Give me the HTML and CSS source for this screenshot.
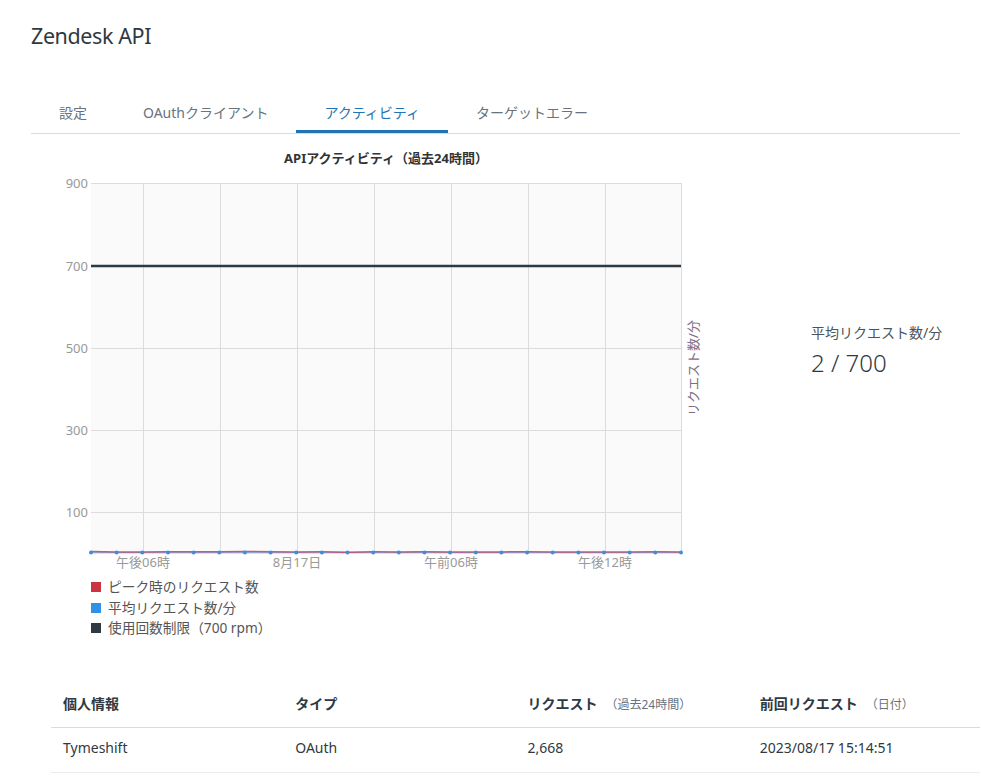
FILE: index.html
```html
<!DOCTYPE html>
<html lang="ja">
<head>
<meta charset="utf-8">
<title>Zendesk API</title>
<link rel="stylesheet" href="styles.css">
</head>
<body>
<div class="page">
  <h1 class="title">Zendesk API</h1>
  <nav class="tabs">
    <div class="tab">設定</div>
    <div class="tab">OAuthクライアント</div>
    <div class="tab active">アクティビティ</div>
    <div class="tab">ターゲットエラー</div>
  </nav>

  <section class="activity">
    <div class="chart-col">
      <svg class="chart" width="720" height="436" viewBox="0 0 720 436">
        <text class="chart-title" x="386" y="29" text-anchor="middle">APIアクティビティ（過去24時間）</text>
        <rect x="91" y="49" width="590" height="369" fill="#fafafa"/>
        <g stroke="#dcdcdc" stroke-width="1">
          <line x1="91" y1="49.5" x2="681" y2="49.5"/>
          <line x1="91" y1="214.5" x2="681" y2="214.5"/>
          <line x1="91" y1="296.5" x2="681" y2="296.5"/>
          <line x1="91" y1="378.5" x2="681" y2="378.5"/>
          <line x1="143.5" y1="49" x2="143.5" y2="418"/>
          <line x1="220.5" y1="49" x2="220.5" y2="418"/>
          <line x1="297.5" y1="49" x2="297.5" y2="418"/>
          <line x1="374.5" y1="49" x2="374.5" y2="418"/>
          <line x1="451.5" y1="49" x2="451.5" y2="418"/>
          <line x1="528.5" y1="49" x2="528.5" y2="418"/>
          <line x1="605.5" y1="49" x2="605.5" y2="418"/>
          <line x1="681.5" y1="49" x2="681.5" y2="418"/>
        </g>
        <line x1="91" y1="132" x2="681" y2="132" stroke="#2f3941" stroke-width="2.5"/>
        <g class="ylab" text-anchor="end">
          <text x="88" y="54">900</text>
          <text x="88" y="137">700</text>
          <text x="88" y="219">500</text>
          <text x="88" y="301">300</text>
          <text x="88" y="383">100</text>
        </g>
        <line x1="91" y1="418.8" x2="681" y2="418.8" stroke="#3c8fe0" stroke-width="1" opacity="0.8"/>
        <polyline fill="none" stroke="#b8405e" stroke-width="1.5" opacity="0.85" points="91,417.6 116.6,418 142.3,418 168,417.7 193.6,417.8 219.3,417.8 244.9,417.4 270.6,417.8 296.2,417.9 321.9,417.8 347.5,418.2 373.2,417.8 398.8,417.9 424.5,417.8 450.1,417.9 475.8,418 501.4,417.9 527.1,417.8 552.7,417.9 578.4,417.9 604,418 629.7,417.9 655.3,417.8 681,417.9"/>
        <g fill="#3c8fe0">
          <circle cx="91" cy="418.4" r="2"/><circle cx="116.6" cy="418.4" r="2"/><circle cx="142.3" cy="418.4" r="2"/><circle cx="168" cy="418.4" r="2"/><circle cx="193.6" cy="418.4" r="2"/><circle cx="219.3" cy="418.4" r="2"/><circle cx="244.9" cy="418.4" r="2"/><circle cx="270.6" cy="418.4" r="2"/><circle cx="296.2" cy="418.4" r="2"/><circle cx="321.9" cy="418.4" r="2"/><circle cx="347.5" cy="418.6" r="2"/><circle cx="373.2" cy="418.4" r="2"/><circle cx="398.8" cy="418.4" r="2"/><circle cx="424.5" cy="418.4" r="2"/><circle cx="450.1" cy="418.4" r="2"/><circle cx="475.8" cy="418.4" r="2"/><circle cx="501.4" cy="418.4" r="2"/><circle cx="527.1" cy="418.4" r="2"/><circle cx="552.7" cy="418.4" r="2"/><circle cx="578.4" cy="418.4" r="2"/><circle cx="604" cy="418.4" r="2"/><circle cx="629.7" cy="418.4" r="2"/><circle cx="655.3" cy="418.4" r="2"/><circle cx="681" cy="418.4" r="2"/>
        </g>
        <g class="xlab" text-anchor="middle">
          <text x="143" y="433">午後06時</text>
          <text x="297" y="433">8月17日</text>
          <text x="451" y="433">午前06時</text>
          <text x="605" y="433">午後12時</text>
        </g>
        <text class="axis-title" x="693" y="234" text-anchor="middle" dominant-baseline="central" transform="rotate(-90 693 234)">リクエスト数/分</text>
      </svg>
      <ul class="legend">
        <li><span class="swatch red"></span>ピーク時のリクエスト数</li>
        <li><span class="swatch blue"></span>平均リクエスト数/分</li>
        <li><span class="swatch dark"></span>使用回数制限（700 rpm）</li>
      </ul>
    </div>
    <div class="stat">
      <div class="stat-label">平均リクエスト数/分</div>
      <div class="stat-value">2 / 700</div>
    </div>
  </section>

  <table class="clients">
    <thead>
      <tr>
        <th>個人情報</th>
        <th>タイプ</th>
        <th>リクエスト<span class="sub">（過去24時間）</span></th>
        <th>前回リクエスト<span class="sub">（日付）</span></th>
      </tr>
    </thead>
    <tbody>
      <tr>
        <td>Tymeshift</td>
        <td>OAuth</td>
        <td>2,668</td>
        <td>2023/08/17 15:14:51</td>
      </tr>
    </tbody>
  </table>
</div>
</body>
</html>
```

FILE: styles.css
```css
html, body {
  margin: 0;
  padding: 0;
  background: #ffffff;
}

body {
  font-family: "Noto Sans", "Noto Sans CJK JP", sans-serif;
  color: #2f3941;
}

.page {
  width: 981px;
  padding-top: 21px;
}

.title {
  margin: 0 0 0 31px;
  font-size: 21.5px;
  line-height: 30px;
  font-weight: 400;
  letter-spacing: -0.4px;
  color: #2f3941;
}

.tabs {
  display: flex;
  margin: 39px 0 0 31px;
  width: 929px;
  border-bottom: 1px solid #d8dcde;
}

.tab {
  padding: 13px 28px 7px;
  font-size: 14px;
  line-height: 20px;
  color: #68737d;
  border-bottom: 3px solid transparent;
  white-space: nowrap;
}

.tab.active {
  color: #1f73b7;
  border-bottom-color: #1f73b7;
}

.activity {
  display: flex;
}

.chart-col {
  width: 720px;
}

.chart {
  display: block;
  font-family: "Noto Sans", "Noto Sans CJK JP", sans-serif;
}

.chart-title {
  font-size: 13px;
  font-weight: 700;
  fill: #333333;
}

.ylab text,
.xlab text {
  font-size: 13px;
  fill: #999999;
}

.axis-title {
  font-size: 13px;
  fill: #7d6e86;
}

.legend {
  list-style: none;
  margin: 7px 0 0 91px;
  padding: 0;
}

.legend li {
  display: flex;
  align-items: center;
  font-size: 13.7px;
  line-height: 20.5px;
  color: #555555;
}

.swatch {
  width: 10px;
  height: 10px;
  margin-right: 7px;
  flex: none;
}

.swatch.red { background: #cc3340; }
.swatch.blue { background: #3091e6; }
.swatch.dark { background: #2f3941; }

.stat {
  padding: 189px 0 0 91px;
}

.stat-label {
  font-size: 14px;
  line-height: 20px;
  color: #49545c;
  white-space: nowrap;
}

.stat-value {
  margin-top: 4px;
  font-size: 24px;
  line-height: 32px;
  font-weight: 300;
  color: #2f3941;
}

.clients {
  margin: 40px 0 0 51px;
  width: 929px;
  border-collapse: collapse;
  table-layout: fixed;
}

.clients th,
.clients td {
  text-align: left;
  padding: 0 12px;
  font-size: 14px;
  white-space: nowrap;
}

.clients th {
  height: 48px;
  font-weight: 700;
  color: #2f3941;
  border-bottom: 1px solid #d8dcde;
}

.clients td {
  height: 40px;
  padding-bottom: 4px;
  color: #2f3941;
  border-bottom: 1px solid #e9ebed;
}

.sub {
  margin-left: 8px;
  font-size: 12px;
  font-weight: 400;
  color: #68737d;
}
```
